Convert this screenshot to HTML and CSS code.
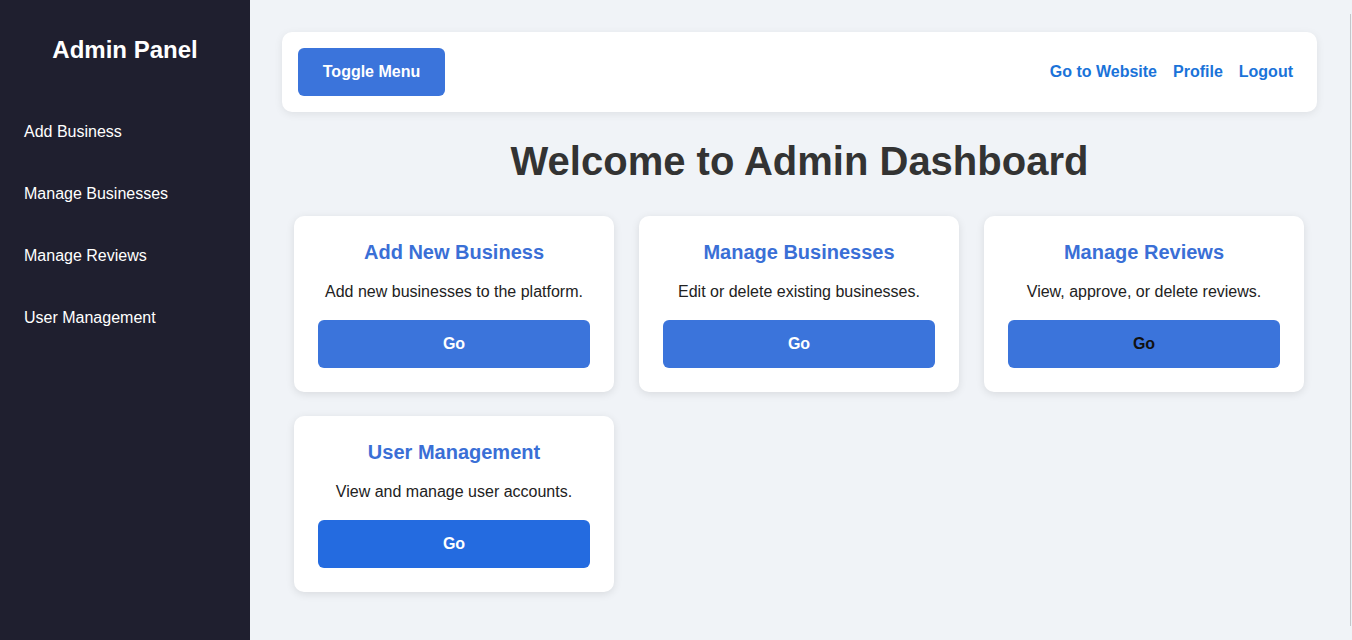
FILE: index.html
```html
<!DOCTYPE html>
<html lang="en">
<head>
<meta charset="utf-8">
<title>Admin Dashboard</title>
<link rel="stylesheet" href="styles.css">
</head>
<body>
<div class="layout">
  <aside class="sidebar">
    <h2 class="brand">Admin Panel</h2>
    <nav class="side-nav">
      <a href="#">Add Business</a>
      <a href="#">Manage Businesses</a>
      <a href="#">Manage Reviews</a>
      <a href="#">User Management</a>
    </nav>
  </aside>
  <main class="main">
    <header class="topbar">
      <button class="toggle">Toggle Menu</button>
      <nav class="top-links">
        <a href="#">Go to Website</a>
        <a href="#">Profile</a>
        <a href="#">Logout</a>
      </nav>
    </header>
    <h1 class="title">Welcome to Admin Dashboard</h1>
    <section class="cards">
      <div class="card">
        <h3>Add New Business</h3>
        <p>Add new businesses to the platform.</p>
        <a class="go" href="#">Go</a>
      </div>
      <div class="card">
        <h3>Manage Businesses</h3>
        <p>Edit or delete existing businesses.</p>
        <a class="go" href="#">Go</a>
      </div>
      <div class="card">
        <h3>Manage Reviews</h3>
        <p>View, approve, or delete reviews.</p>
        <a class="go go-dark" href="#">Go</a>
      </div>
      <div class="card">
        <h3>User Management</h3>
        <p>View and manage user accounts.</p>
        <a class="go go-hover" href="#">Go</a>
      </div>
    </section>
  </main>
</div>
</body>
</html>
```
FILE: styles.css
```css
* { box-sizing: border-box; }
html, body { margin: 0; padding: 0; height: 100%; }
body {
  font-family: "Liberation Sans", Arial, sans-serif;
  background: #f0f3f7;
  color: #333;
}
.layout {
  display: flex;
  min-height: 640px;
  height: 640px;
}
.sidebar {
  width: 250px;
  flex-shrink: 0;
  background: #1f1f2f;
  color: #fff;
  padding: 36px 0 0;
}
.brand {
  margin: 0;
  text-align: center;
  font-size: 24px;
  line-height: 28px;
  font-weight: bold;
}
.side-nav {
  display: flex;
  flex-direction: column;
  margin-top: 37px;
}
.side-nav a {
  color: #fff;
  text-decoration: none;
  font-size: 16px;
  line-height: 18px;
  padding: 22px 24px;
}
.main {
  flex: 1;
  padding: 32px 35px 32px 32px;
  position: relative;
}
.main::after {
  content: "";
  position: absolute;
  right: 1px;
  top: 14px;
  bottom: 14px;
  width: 1px;
  background: #c4c6ca;
}
.topbar {
  background: #fff;
  border-radius: 10px;
  box-shadow: 0 2px 8px rgba(0,0,0,0.08);
  padding: 16px 24px 16px 16px;
  display: flex;
  align-items: center;
  justify-content: space-between;
  height: 80px;
}
.toggle {
  background: #3b74db;
  color: #fff;
  border: none;
  border-radius: 6px;
  font-family: inherit;
  font-size: 16px;
  font-weight: bold;
  width: 147px;
  height: 48px;
  cursor: pointer;
}
.top-links {
  display: flex;
  gap: 16px;
}
.top-links a {
  color: #1a73d9;
  font-weight: bold;
  font-size: 16px;
  text-decoration: none;
}
.title {
  margin: 26px 0 32px;
  text-align: center;
  font-size: 40px;
  line-height: 46px;
  color: #333;
}
.cards {
  display: grid;
  grid-template-columns: repeat(3, 1fr);
  gap: 24px 25px;
  padding: 0 13px 0 12px;
}
.card {
  background: #fff;
  border-radius: 10px;
  box-shadow: 0 2px 8px rgba(0,0,0,0.1);
  padding: 24px;
  text-align: center;
  height: 176px;
}
.card h3 {
  margin: 1px 0 16px;
  color: #3a6fd6;
  font-size: 20px;
  line-height: 23px;
}
.card p {
  margin: 0 0 16px;
  font-size: 16px;
  line-height: 24px;
  color: #222;
}
.go {
  display: block;
  height: 48px;
  line-height: 48px;
  background: #3b74db;
  color: #fff;
  border-radius: 6px;
  font-weight: bold;
  font-size: 16px;
  text-decoration: none;
}
.go-dark { color: #111; }
.go-hover { background: #246be0; }
```
